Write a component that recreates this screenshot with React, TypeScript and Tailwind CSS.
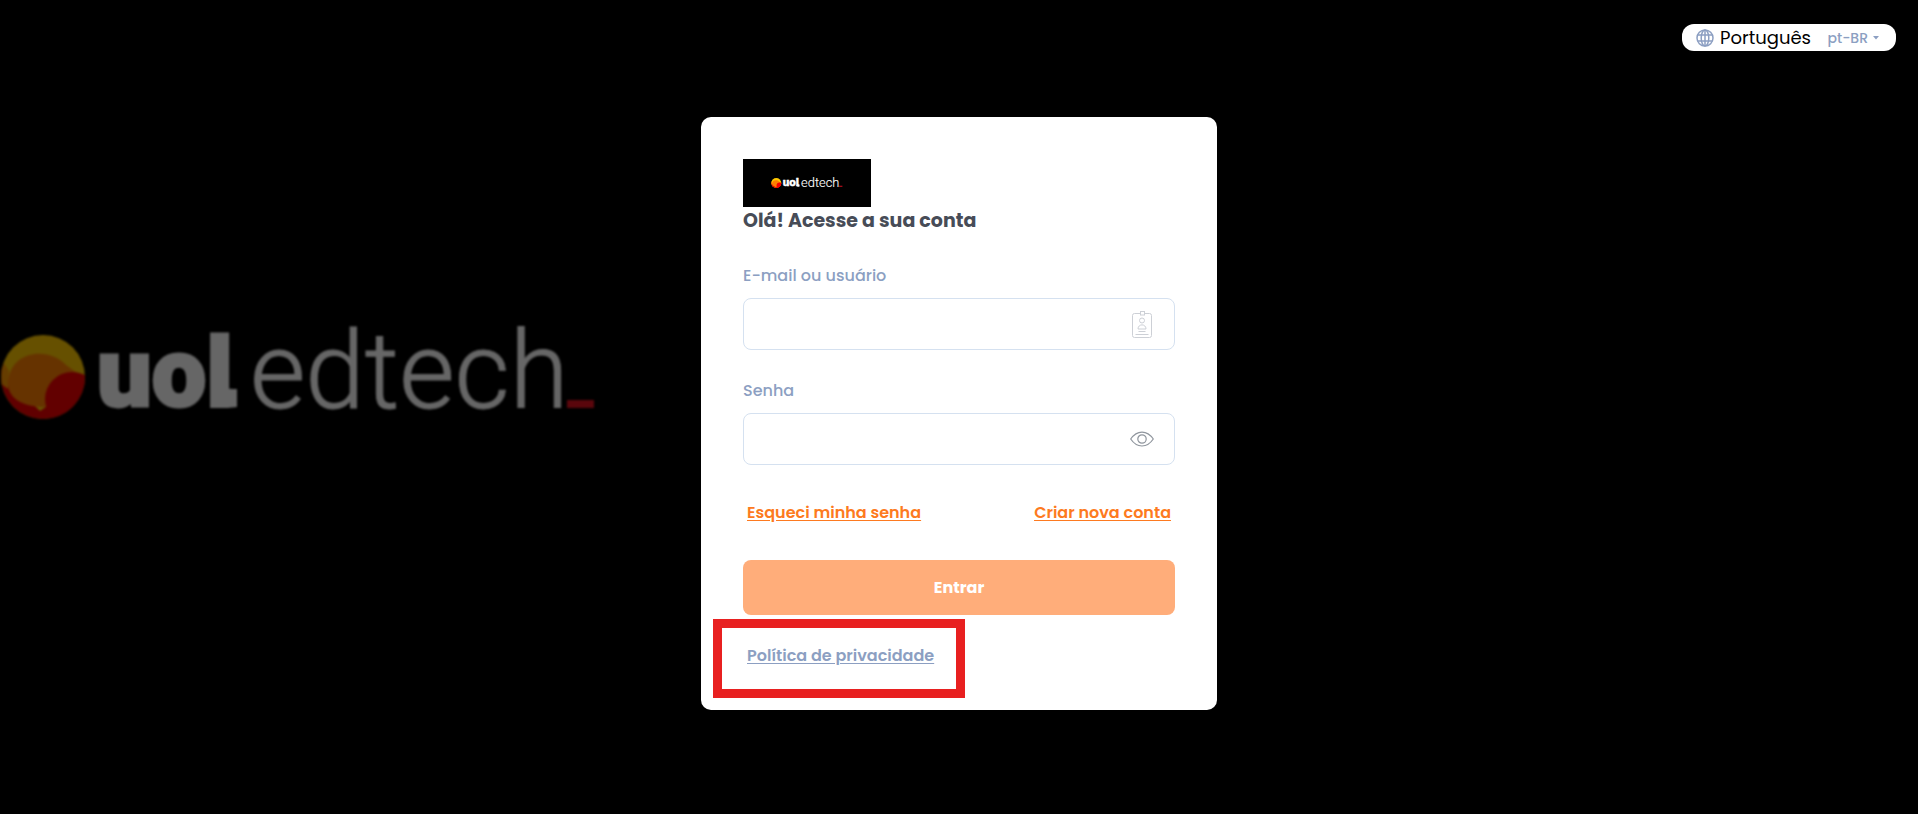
import { useState } from "react";

function BrandLogo({ className }: { className: string }) {
  return (
    <svg viewBox="0 -25 598 150" className={className} role="img" aria-label="uol edtech">
      <defs>
        <clipPath id="ball">
          <circle cx="43" cy="50" r="42" />
        </clipPath>
      </defs>
      <g clipPath="url(#ball)">
        <rect x="0" y="0" width="90" height="100" fill="#ffc800" />
        <path d="M0 36 L7 52 L40 84 L90 50 V100 H0Z" fill="#f00000" />
        <path d="M0 30 L9 44 L8 62 L0 56Z" fill="#ff9800" />
        <path d="M8 56 C10 22 50 20 66 38 L80 48 L76 60 L46 80 C20 80 8 70 8 56Z" fill="#ff8000" />
        <circle cx="72" cy="72" r="27" fill="#f40000" />
      </g>
      <text x="97" y="79" fontSize="97" fontWeight="900" fill="#fff" stroke="#fff" strokeWidth="3" fontFamily="Roboto, sans-serif">
        uol
      </text>
      <path d="M216 61 H226 Q228 62 237 62 V80 Q220 83 212 74Z" fill="#fff" />
      <text x="250" y="81" fontSize="107" fontWeight="300" fill="#fff" stroke="#fff" strokeWidth="1" fontFamily="Roboto, sans-serif">
        edtech
      </text>
      <rect x="567" y="73" width="27" height="8" fill="#e01020" />
    </svg>
  );
}

function GlobeIcon() {
  return (
    <svg viewBox="0 0 18 18" className="size-[18px]" fill="none" stroke="#8c9fc2" strokeWidth="1.5" aria-hidden="true">
      <circle cx="9" cy="9" r="8" />
      <ellipse cx="9" cy="9" rx="3.8" ry="8" />
      <path d="M9 1v16M1.8 6h14.4M1.8 12h14.4" />
    </svg>
  );
}

function BadgeIcon() {
  return (
    <svg viewBox="0 0 24 28" className="h-7 w-6" fill="none" stroke="#cdd0d6" strokeWidth="1" aria-hidden="true">
      <path d="M10 3.500H4.500a2 2 0 0 0-2 2v20a2 2 0 0 0 2 2h15a2 2 0 0 0 2-2v-20a2 2 0 0 0-2-2H14" />
      <rect x="10.500" y="1.500" width="4" height="3.500" />
      <circle cx="12" cy="10.500" r="2.500" />
      <path d="M8 19c0-5.500 8-5.500 8 0ZM8.500 21.500h7M5.500 24.500h13" />
    </svg>
  );
}

function EyeIcon() {
  return (
    <svg viewBox="0 0 24 24" className="size-6" fill="none" stroke="#8f959d" strokeWidth="1.200" aria-hidden="true">
      <path d="M.7 12C7 2.700 17 2.700 23.300 12C17 21.300 7 21.300 .7 12Z" />
      <circle cx="12" cy="12" r="4.200" />
    </svg>
  );
}

const labelClass = "block text-base leading-6 font-medium text-[#8c9fc2]";
const fieldClass =
  "mt-[10px] flex h-[52px] items-center rounded-lg border border-[#d5e1f0] bg-white pr-5 pl-4 focus-within:border-[#8c9fc2]";
const inputClass = "min-w-0 flex-1 bg-transparent text-base text-[#474c57] outline-none";

export default function App() {
  const [showPassword, setShowPassword] = useState(false);

  return (
    <div className="relative flex min-h-screen flex-col bg-black font-['Poppins','Inter',sans-serif]">
      <div className="absolute inset-0 overflow-hidden">
        <BrandLogo className="mt-[302px] h-[150px] w-[598px] opacity-40 blur-[1px]" />
      </div>

      <header className="relative flex justify-end px-[22px] pt-6">
        <button
          type="button"
          aria-haspopup="listbox"
          className="flex h-[27px] w-[214px] items-center rounded-xl bg-white pr-[17px] pl-[14px]"
        >
          <GlobeIcon />
          <span className="ml-[6px] text-lg leading-6 text-black">Português</span>
          <span className="ml-auto text-sm leading-6 font-medium text-[#8c9fc2]">pt-BR</span>
          <svg viewBox="0 0 6 4" className="ml-[5px] h-1 w-[6px]" fill="#8c9fc2" aria-hidden="true">
            <path d="M0 0h6L3 3.500Z" />
          </svg>
        </button>
      </header>

      <main className="relative flex flex-1 items-start justify-center px-4 pt-[66px] pb-10">
        <form
          className="w-full max-w-[516px] rounded-[10px] bg-white px-[42px] pt-[42px] pb-[42px]"
          onSubmit={(event) => event.preventDefault()}
        >
          <div className="flex h-12 w-32 items-center justify-center bg-black">
            <BrandLogo className="h-[18px] w-[72px]" />
          </div>
          <h1 className="text-[19px] leading-7 font-bold text-[#474c57]">Olá! Acesse a sua conta</h1>

          <div className="mt-[29px]">
            <label htmlFor="user" className={labelClass}>
              E-mail ou usuário
            </label>
            <div className={fieldClass}>
              <input id="user" type="text" autoComplete="username" className={inputClass} />
              <BadgeIcon />
            </div>
          </div>

          <div className="mt-[29px]">
            <label htmlFor="password" className={labelClass}>
              Senha
            </label>
            <div className={fieldClass}>
              <input
                id="password"
                type={showPassword ? "text" : "password"}
                autoComplete="current-password"
                className={inputClass}
              />
              <button type="button" aria-label="Mostrar senha" onClick={() => setShowPassword(!showPassword)}>
                <EyeIcon />
              </button>
            </div>
          </div>

          <div className="mt-9 flex justify-between px-1 text-base leading-6 font-semibold text-[#fd7a20] underline underline-offset-2">
            <a href="#recuperar">Esqueci minha senha</a>
            <a href="#criar">Criar nova conta</a>
          </div>

          <button type="submit" className="mt-[35px] h-[55px] w-full rounded-lg bg-[#ffad7a] text-base font-bold text-white">
            Entrar
          </button>

          <div className="relative mt-[29px] px-1">
            <a
              href="#privacidade"
              className="block w-fit text-base leading-6 font-semibold text-[#8c9fc2] underline underline-offset-2"
            >
              Política de privacidade
            </a>
            <span className="pointer-events-none absolute -top-[25px] -left-[30px] h-[79px] w-[252px] border-[9px] border-[#e82020]" />
          </div>
        </form>
      </main>
    </div>
  );
}
